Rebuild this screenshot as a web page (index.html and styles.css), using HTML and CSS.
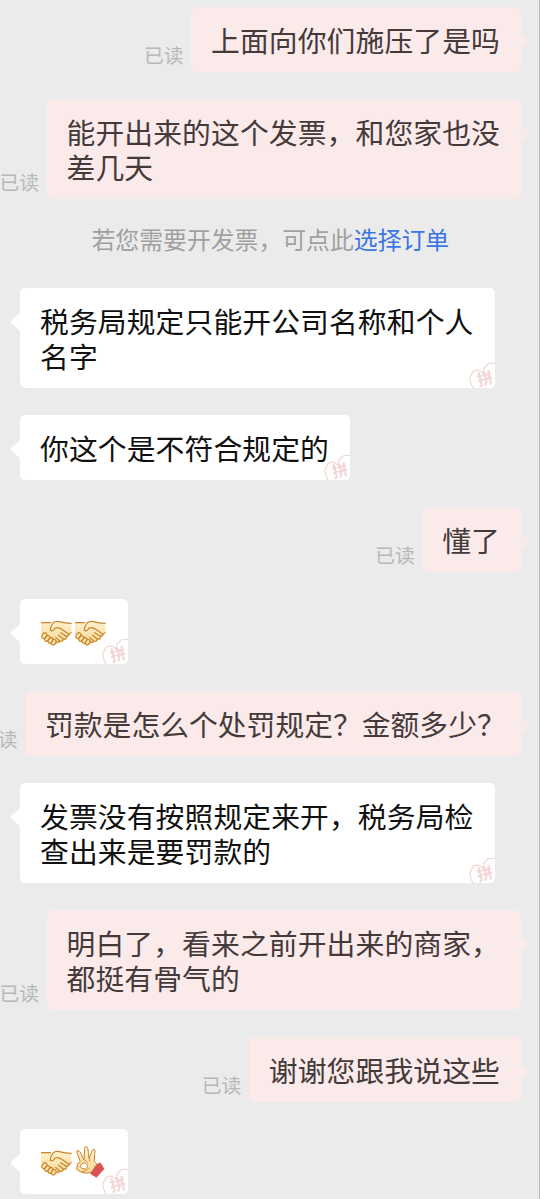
FILE: index.html
```html
<!DOCTYPE html>
<html lang="zh-CN">
<head>
<meta charset="utf-8">
<title>聊天</title>
<link rel="stylesheet" href="styles.css">
</head>
<body>
<svg class="defs" aria-hidden="true">
  <defs>
    <linearGradient id="skin" x1="0" y1="0" x2="0" y2="1">
      <stop offset="0" stop-color="#fff0ce"/><stop offset="1" stop-color="#f9d894"/>
    </linearGradient>
    <symbol id="mark" viewBox="0 0 26 26">
      <path d="M4 26 Q1 21 .8 16 L4 9.500 Q7 7.500 11 8.500 L14.300 11.500 L15 6 L19 2 Q22 .8 26 1.500" fill="none" stroke="#f3d4d4" stroke-width="1.200"/>
      <text x="16.300" y="22.600" text-anchor="middle" class="mark-text" transform="rotate(-14 16 17)">拼</text>
    </symbol>
    <symbol id="shake" viewBox="0 0 92 78">
      <path d="M0 8 L28 8 Q40 3 53 5 Q70 10 92 10 L92 40 L86 42 Q86 49 79 50 Q80 58 70 60 Q68 67 59 66 Q54 72 48 68 Q46 77 36 75 Q28 76 26 68 Q16 69 15 61 Q6 60 8 51 Q1 49 1 41 L0 36Z" fill="url(#skin)"/>
      <g fill="none" stroke="#c7852d" stroke-width="3.600" stroke-linecap="round" stroke-linejoin="round">
        <path d="M1 8 L28 8 M92 10 Q70 10 55 5 Q44 2 36 9 Q28 20 28 31 Q36 36 42 24 Q52 20 62 28 L84 43 Q83 51 75 47"/>
        <path d="M59 38 L76 49 Q77 60 67 57 L52 45 M66 56 Q66 66 56 63 L44 52 M55 64 Q50 70 43 64"/>
        <rect x="4" y="38" width="12" height="18" rx="6" transform="rotate(35 10 47)" fill="#fce3ac"/>
        <rect x="13" y="46" width="11" height="18" rx="5.500" transform="rotate(35 18 55)" fill="#fce3ac"/>
        <rect x="23" y="52" width="11" height="18" rx="5.500" transform="rotate(32 28 61)" fill="#fce3ac"/>
        <rect x="33" y="58" width="11" height="17" rx="5.500" transform="rotate(30 38 66)" fill="#fce3ac"/>
        <path d="M84 43 L91 37"/>
      </g>
    </symbol>
    <symbol id="okay" viewBox="0 0 86 96">
      <path d="M13 47 L3 20 Q1 12 7 14 Q11 15 14 21 L24 42 L26 8 Q27 0 32 2 Q36 3 36 10 L39 38 L48 15 Q51 8 56 11 Q59 14 56 22 L55 46 Q60 52 63 54 L46 79 Q31 84 18 79 L5 73 Q0 70 3 63 Q2 50 13 47Z" fill="url(#skin)" stroke="#c7852d" stroke-width="3" stroke-linejoin="round"/>
      <path d="M66 53 L73 51 L84 69 L61 94 L44 83Z" fill="#df4f54" stroke="#c9434a" stroke-width="2" stroke-linejoin="round"/>
      <path d="M13 62 Q14 52 23 51 Q36 53 34 62 Q30 72 18 67Z" fill="#fff" stroke="#c7852d" stroke-width="3"/>
      <path d="M24 42 Q31 44 36 51 M39 38 L43 47 M18 78 Q32 74 38 67" fill="none" stroke="#c7852d" stroke-width="2.500"/>
    </symbol>
  </defs>
</svg>
<main class="chat">
  <div class="row mine"><span class="read">已读</span><div class="bubble">上面向你们施压了是吗</div></div>
  <div class="row mine"><span class="read">已读</span><div class="bubble">能开出来的这个发票，和您家也没<br>差几天</div></div>
  <p class="notice">若您需要开发票，可点此<a class="link">选择订单</a></p>
  <div class="row"><div class="bubble">税务局规定只能开公司名称和个人<br>名字<svg class="mark"><use href="#mark"/></svg></div></div>
  <div class="row"><div class="bubble">你这个是不符合规定的<svg class="mark"><use href="#mark"/></svg></div></div>
  <div class="row mine"><span class="read">已读</span><div class="bubble">懂了</div></div>
  <div class="row"><div class="bubble emojis"><svg class="shake"><use href="#shake"/></svg><svg class="shake"><use href="#shake"/></svg><svg class="mark"><use href="#mark"/></svg></div></div>
  <div class="row mine"><span class="read">已读</span><div class="bubble question">罚款是怎么个处罚规定？金额多少？</div></div>
  <div class="row"><div class="bubble">发票没有按照规定来开，税务局检<br>查出来是要罚款的<svg class="mark"><use href="#mark"/></svg></div></div>
  <div class="row mine"><span class="read">已读</span><div class="bubble">明白了，看来之前开出来的商家，<br>都挺有骨气的</div></div>
  <div class="row mine"><span class="read">已读</span><div class="bubble">谢谢您跟我说这些</div></div>
  <div class="row"><div class="bubble emojis"><svg class="shake"><use href="#shake"/></svg><svg class="okay"><use href="#okay"/></svg><svg class="mark"><use href="#mark"/></svg></div></div>
</main>
</body>
</html>
```
FILE: styles.css
```css
* { box-sizing: border-box; }
html, body { margin: 0; background: #ebebeb; }
body { font-family: "Noto Sans CJK SC", sans-serif; overflow: hidden; }
.defs { display: block; width: 0; height: 0; }
.chat {
  height: 1199px;
  padding: 7px 18px 0 20px;
  border-right: 1px solid #bababa;
  display: flex;
  flex-direction: column;
  gap: 27px;
  overflow: hidden;
}
.row { display: flex; align-items: flex-end; flex: none; }
.mine { justify-content: flex-end; }
.bubble {
  position: relative;
  flex: none;
  padding: 14.500px 21.500px 15.500px 20px;
  border-radius: 5px;
  background: #fff;
  color: #111;
  font-size: 28.800px;
  letter-spacing: .1px;
  line-height: 35px;
  font-weight: 400;
  white-space: nowrap;
}
.mine .bubble { padding-right: 21px; background: #fbeaea; color: #453a3a; }
.bubble::before {
  content: "";
  position: absolute;
  top: 24px;
  left: -9px;
  width: 10px;
  height: 20px;
  background: inherit;
  clip-path: polygon(100% 0, 0 45%, 0 55%, 100% 100%);
}
.mine .bubble::before {
  left: auto;
  right: -7px;
  width: 8px;
  clip-path: polygon(0 10%, 100% 45%, 100% 60%, 0 95%);
}
.mine .question { width: 496px; letter-spacing: 0; }
.read {
  flex: none;
  margin-right: 7.500px;
  padding-bottom: 2px;
  font-size: 19.800px;
  line-height: 30px;
  font-weight: 400;
  color: #b8b8b8;
}
.notice {
  margin: 0;
  height: 35px;
  padding-left: 71.500px;
  font-size: 23.850px;
  line-height: 25px;
  font-weight: 400;
  color: #a0a0a0;
  white-space: nowrap;
}
.link { color: #3a76e3; }
.mark {
  position: absolute;
  right: 0;
  bottom: 0;
  width: 26px;
  height: 26px;
  border-bottom-right-radius: 5px;
}
.mark-text { font-size: 16px; font-weight: 700; letter-spacing: 0; fill: #f4d4d4; }
.mine + .row .emojis, .emojis {
  display: flex;
  align-items: center;
  gap: 3.500px;
  width: 108px;
  height: 65px;
  padding: 2px 0 0 21px;
}
.shake { width: 30.700px; height: 26px; }
.okay { width: 28.700px; height: 32px; margin: 0 0 2px 1px; }
```
